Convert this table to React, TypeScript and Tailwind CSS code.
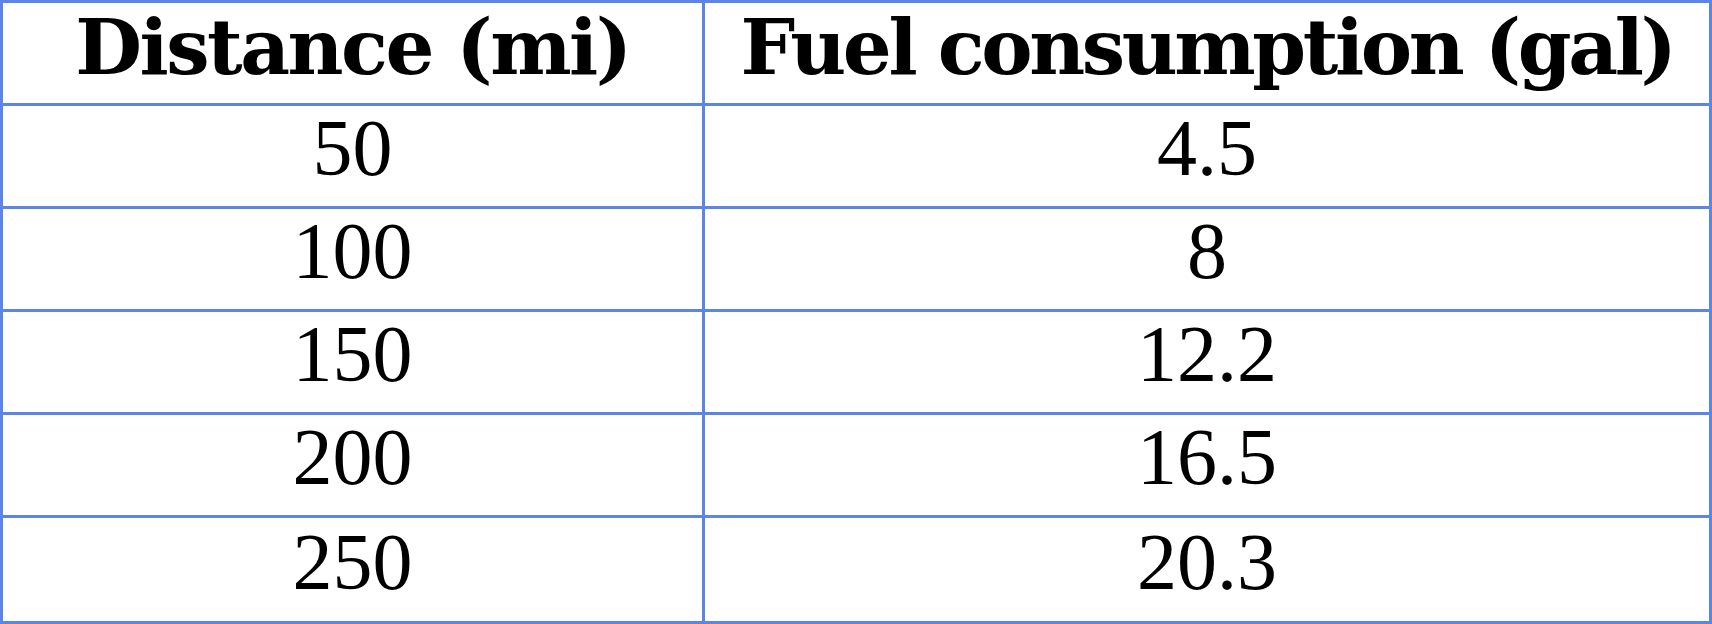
import React from "react";

const rows: [string, string][] = [
  ["50", "4.5"],
  ["100", "8"],
  ["150", "12.2"],
  ["200", "16.5"],
  ["250", "20.3"],
];

export default function App() {
  return (
    <div className="w-[1712px] h-[624px] bg-white">
      <div className="w-[1712px] h-[624px] border-[3px] border-[#5b86e5] grid grid-cols-[702px_1fr] grid-rows-6 text-black">
        <div className="border-r-[3px] border-b-[3px] border-[#5b86e5] flex items-center justify-center pb-[12px]">
          <span className="font-['DejaVu_Serif',serif] font-bold text-[77px] tracking-[-2.5px] leading-none">Distance (mi)</span>
        </div>
        <div className="border-b-[3px] border-[#5b86e5] flex items-center justify-center pb-[12px]">
          <span className="font-['DejaVu_Serif',serif] font-bold text-[77px] tracking-[-3.4px] leading-none">Fuel consumption (gal)</span>
        </div>
        {rows.map(([a, b], i) => (
          <React.Fragment key={a}>
            <div
              className={
                i < rows.length - 1
                  ? "border-r-[3px] border-b-[3px] border-[#5b86e5] flex items-center justify-center pb-[16px]"
                  : "border-r-[3px] border-[#5b86e5] flex items-center justify-center pb-[16px]"
              }
            >
              <span className="font-['Liberation_Serif',serif] text-[80px] leading-none">{a}</span>
            </div>
            <div
              className={
                i < rows.length - 1
                  ? "border-b-[3px] border-[#5b86e5] flex items-center justify-center pb-[16px]"
                  : "flex items-center justify-center pb-[16px]"
              }
            >
              <span className="font-['Liberation_Serif',serif] text-[80px] leading-none">{b}</span>
            </div>
          </React.Fragment>
        ))}
      </div>
    </div>
  );
}
